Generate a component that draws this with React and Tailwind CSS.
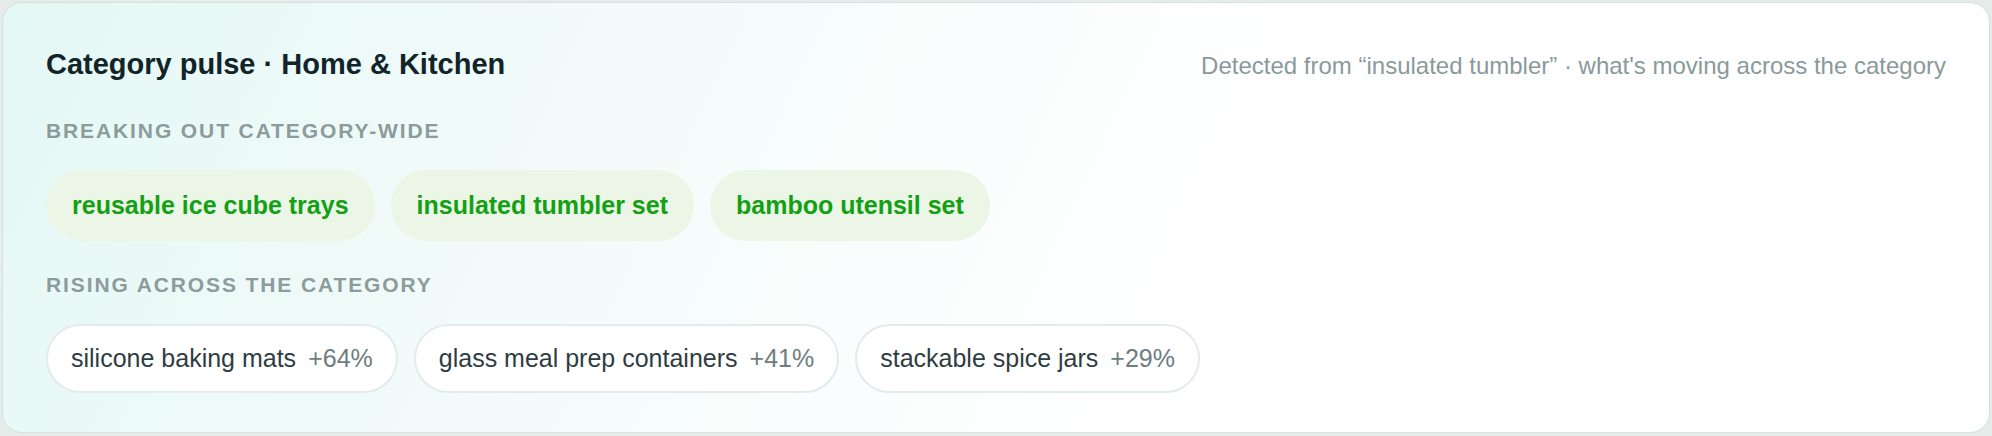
export default function App() {
  const breakout = ['reusable ice cube trays', 'insulated tumbler set', 'bamboo utensil set'];

  const rising = [
    { term: 'silicone baking mats', change: '+64%' },
    { term: 'glass meal prep containers', change: '+41%' },
    { term: 'stackable spice jars', change: '+29%' },
  ];

  return (
    <div
      className="h-[436px] w-full bg-[#e6ecea] pt-[2px] pl-[2px] pr-[2px] pb-[3px]"
      style={{ fontFamily: '"Liberation Sans", Arial, sans-serif' }}
    >
      <div className="h-full rounded-[20px] border border-[#d4e1dd] bg-[linear-gradient(115deg,#e4f8f5_0%,#f3fbfa_30%,#ffffff_60%)] px-[43px] pt-[44px]">
        {/* header */}
        <div className="flex items-baseline justify-between">
          <h2 className="text-[29px] font-bold leading-[35px] text-[#10242a]">
            Category pulse · Home &amp; Kitchen
          </h2>
          <div className="text-[24px] leading-[30px] text-[#8a9a9b]">
            Detected from “insulated tumbler” · what's moving across the category
          </div>
        </div>

        {/* breaking out */}
        <div className="mt-[36px] text-[21px] font-bold uppercase leading-[26px] tracking-[0.09em] text-[#8c9b9b]">
          Breaking out category-wide
        </div>
        <div className="mt-[26px] flex gap-[16px]">
          {breakout.map((t) => (
            <div
              key={t}
              className="rounded-full bg-[#ebf6e7] px-[26px] py-[17px] text-[25px] font-bold leading-[37px] text-[#14a014]"
            >
              {t}
            </div>
          ))}
        </div>

        {/* rising */}
        <div className="mt-[31px] text-[21px] font-bold uppercase leading-[26px] tracking-[0.09em] text-[#8c9b9b]">
          Rising across the category
        </div>
        <div className="mt-[26px] flex gap-[16px]">
          {rising.map((r) => (
            <div
              key={r.term}
              className="flex gap-[12px] rounded-full border-2 border-[#e3ecea] bg-white px-[23px] py-[14px] text-[25px] leading-[37px]"
            >
              <span className="text-[#2e3d42]">{r.term}</span>
              <span className="text-[#6e7d7e]">{r.change}</span>
            </div>
          ))}
        </div>
      </div>
    </div>
  );
}
